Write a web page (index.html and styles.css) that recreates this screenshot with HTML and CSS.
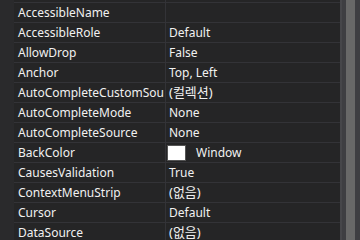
FILE: index.html
```html
<!DOCTYPE html>
<html lang="ko">
<head>
  <meta charset="UTF-8">
  <meta name="viewport" content="width=device-width, initial-scale=1.0">
  <title>속성</title>
  <link rel="stylesheet" href="styles.css">
</head>
<body>
  <div class="panel">
    <div class="gutter"></div>
    <div class="grid">
      <div class="row"><div class="name"></div><div class="value"></div></div>
      <div class="row"><div class="name">AccessibleName</div><div class="value"></div></div>
      <div class="row"><div class="name">AccessibleRole</div><div class="value">Default</div></div>
      <div class="row"><div class="name">AllowDrop</div><div class="value">False</div></div>
      <div class="row"><div class="name">Anchor</div><div class="value">Top, Left</div></div>
      <div class="row"><div class="name">AutoCompleteCustomSou</div><div class="value ko">(컬렉션)</div></div>
      <div class="row"><div class="name">AutoCompleteMode</div><div class="value">None</div></div>
      <div class="row"><div class="name">AutoCompleteSource</div><div class="value">None</div></div>
      <div class="row"><div class="name">BackColor</div><div class="value"><span class="swatch"></span>Window</div></div>
      <div class="row"><div class="name">CausesValidation</div><div class="value">True</div></div>
      <div class="row"><div class="name">ContextMenuStrip</div><div class="value ko">(없음)</div></div>
      <div class="row"><div class="name">Cursor</div><div class="value">Default</div></div>
      <div class="row"><div class="name">DataSource</div><div class="value ko">(없음)</div></div>
    </div>
    <div class="scrollbar"><div class="thumb"></div></div>
  </div>
</body>
</html>
```
FILE: styles.css
```css
body {
  margin: 0;
  padding: 0;
  background-color: #252526;
  font-family: "Noto Sans", "Noto Sans CJK KR", sans-serif;
  font-size: 12px;
  color: #f1f1f1;
  overflow: hidden;
}

.panel {
  display: flex;
  height: 240px;
  overflow: hidden;
}

.gutter {
  width: 14px;
  flex-shrink: 0;
  background-color: #2a2a2c;
}

.grid {
  width: 326px;
  flex-shrink: 0;
  margin-top: -17px;
}

.row {
  display: flex;
  height: 19px;
  border-bottom: 1px solid #333337;
  line-height: 19px;
}

.name {
  width: 147px;
  padding-left: 4px;
  border-right: 1px solid #333337;
  white-space: nowrap;
  overflow: hidden;
}

.value {
  flex: 1;
  padding-left: 3px;
  display: flex;
  align-items: center;
  white-space: nowrap;
}

.value.ko {
  font-size: 13px;
}

.swatch {
  width: 19px;
  height: 16px;
  background-color: #ffffff;
  border: 1px solid #555;
  box-sizing: border-box;
  margin-left: -2px;
  margin-right: 10px;
}

.scrollbar {
  flex: 1;
  background-color: #3e3e42;
  border-left: 2px solid #46464a;
  padding-left: 4px;
}

.thumb {
  width: 9px;
  height: 240px;
  background-color: #686868;
}
```
